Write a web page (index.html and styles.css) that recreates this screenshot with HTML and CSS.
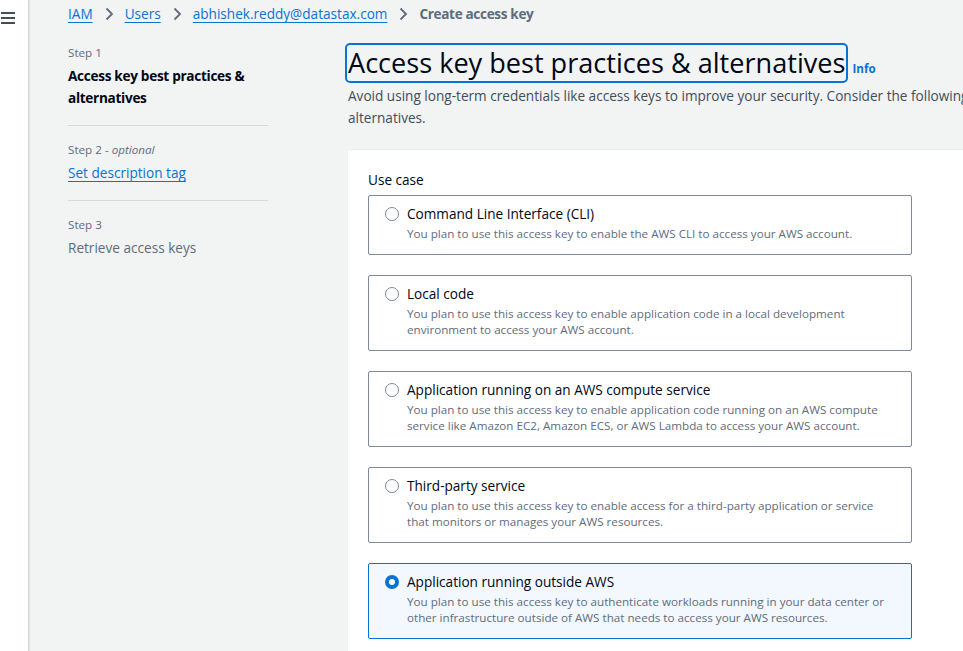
FILE: index.html
```html
<!DOCTYPE html>
<html lang="en">
<head>
<meta charset="utf-8">
<title>Create access key</title>
<link rel="stylesheet" href="styles.css">
</head>
<body>
<div class="app">
  <aside class="navstrip">
    <div class="hamburger"><span></span><span></span><span></span></div>
  </aside>
  <div class="page">
    <nav class="breadcrumbs">
      <a href="#">IAM</a>
      <svg class="chev" viewBox="0 0 16 16"><path d="M5.5 2.5l5.5 5.5-5.5 5.5"/></svg>
      <a href="#">Users</a>
      <svg class="chev" viewBox="0 0 16 16"><path d="M5.5 2.5l5.5 5.5-5.5 5.5"/></svg>
      <a href="#">abhishek.reddy@datastax.com</a>
      <svg class="chev" viewBox="0 0 16 16"><path d="M5.5 2.5l5.5 5.5-5.5 5.5"/></svg>
      <span class="crumb-current">Create access key</span>
    </nav>
    <div class="layout">
      <ol class="steps">
        <li class="step">
          <div class="step-label">Step 1</div>
          <div class="step-title active">Access key best practices &amp; alternatives</div>
        </li>
        <li class="step">
          <div class="step-label">Step 2 - <i>optional</i></div>
          <a class="step-title link" href="#">Set description tag</a>
        </li>
        <li class="step">
          <div class="step-label">Step 3</div>
          <div class="step-title disabled">Retrieve access keys</div>
        </li>
      </ol>
      <main class="main">
        <div class="header">
          <h1 class="title">Access key best practices &amp; alternatives</h1>
          <a class="info" href="#">Info</a>
        </div>
        <p class="desc">Avoid using long-term credentials like access keys to improve your security. Consider the following alternatives.</p>
        <section class="card">
          <div class="field-label">Use case</div>
          <div class="tiles">
            <label class="tile">
              <span class="radio"></span>
              <span class="tile-text">
                <span class="tile-title">Command Line Interface (CLI)</span>
                <span class="tile-desc">You plan to use this access key to enable the AWS CLI to access your AWS account.</span>
              </span>
            </label>
            <label class="tile">
              <span class="radio"></span>
              <span class="tile-text">
                <span class="tile-title">Local code</span>
                <span class="tile-desc">You plan to use this access key to enable application code in a local development environment to access your AWS account.</span>
              </span>
            </label>
            <label class="tile">
              <span class="radio"></span>
              <span class="tile-text">
                <span class="tile-title">Application running on an AWS compute service</span>
                <span class="tile-desc">You plan to use this access key to enable application code running on an AWS compute service like Amazon EC2, Amazon ECS, or AWS Lambda to access your AWS account.</span>
              </span>
            </label>
            <label class="tile">
              <span class="radio"></span>
              <span class="tile-text">
                <span class="tile-title">Third-party service</span>
                <span class="tile-desc">You plan to use this access key to enable access for a third-party application or service that monitors or manages your AWS resources.</span>
              </span>
            </label>
            <label class="tile selected">
              <span class="radio checked"></span>
              <span class="tile-text">
                <span class="tile-title">Application running outside AWS</span>
                <span class="tile-desc">You plan to use this access key to authenticate workloads running in your data center or other infrastructure outside of AWS that needs to access your AWS resources.</span>
              </span>
            </label>
          </div>
        </section>
      </main>
    </div>
  </div>
</div>
</body>
</html>
```

FILE: styles.css
```css
* { box-sizing: border-box; }
html, body {
  margin: 0;
  padding: 0;
  height: 100%;
  overflow: hidden;
}
body {
  font-family: "Open Sans", "Noto Sans", Arial, sans-serif;
  font-size: 13.6px;
  line-height: 20px;
  color: #000716;
  background: #f2f3f3;
}
a { color: #0972d3; }

.app {
  display: flex;
  min-height: 100%;
}
.navstrip {
  flex: 0 0 29px;
  background: #ffffff;
  border-right: 1px solid #d5dbdb;
  box-shadow: 1px 0 1px rgba(0, 7, 22, 0.08);
}
.hamburger {
  display: flex;
  flex-direction: column;
  gap: 3px;
  padding: 12px 0 0 1px;
}
.hamburger span {
  display: block;
  width: 14px;
  height: 2px;
  background: #414d5c;
}

.page {
  flex: 1;
  padding-left: 39px;
  min-width: 0;
}
.breadcrumbs {
  display: flex;
  align-items: center;
  height: 20px;
  margin-top: 4px;
  white-space: nowrap;
}
.breadcrumbs a {
  text-decoration: underline;
  text-underline-offset: 3px;
}
.chev {
  width: 16px;
  height: 16px;
  margin: 0 8px;
  fill: none;
  stroke: #5f6b7a;
  stroke-width: 1.8;
}
.crumb-current {
  color: #5f6b7a;
  font-weight: 700;
  letter-spacing: -0.35px;
}

.layout {
  display: flex;
  gap: 80px;
  margin-top: 19px;
}
.steps {
  list-style: none;
  margin: 0;
  padding: 2px 0 0;
  flex: 0 0 200px;
}
.step {
  border-bottom: 1px solid #d5dbdb;
  padding-bottom: 16px;
  margin-bottom: 16px;
}
.step:last-child { border-bottom: 0; }
.step-label {
  font-size: 11.65px;
  line-height: 16px;
  color: #5f6b7a;
  margin-bottom: 4px;
}
.step-title {
  display: block;
  line-height: 22px;
}
.step-title.active { font-weight: 700; color: #000716; letter-spacing: -0.3px; }
.step-title.link { text-decoration: underline; text-underline-offset: 3px; }
.step-title.disabled { color: #5f6b7a; }

.main {
  flex: 0 0 680px;
  width: 680px;
  margin-left: -3px;
}
.header {
  display: flex;
  align-items: baseline;
  gap: 4px;
}
.title {
  margin: 0;
  font-size: 27.1px;
  font-weight: 400;
  line-height: 36px;
  padding: 0 1px;
  border: 2px solid #0972d3;
  border-radius: 5px;
  color: #000716;
}
.info {
  font-size: 11.65px;
  font-weight: 700;
  text-decoration: none;
}
.desc {
  margin: 2px 0 0 3px;
  line-height: 22px;
  color: #414d5c;
}
.card {
  margin: 20px 0 0 3px;
  background: #ffffff;
  border-top: 1px solid #e9ebed;
  box-shadow: 0 1px 1px rgba(0, 28, 36, 0.1);
  padding: 19px 20px 20px;
  min-height: 520px;
}
.field-label {
  line-height: 22px;
  margin-bottom: 4px;
}
.tiles {
  width: 544px;
  display: flex;
  flex-direction: column;
  gap: 20px;
}
.tile {
  display: flex;
  gap: 8px;
  border: 1px solid #7d8998;
  border-radius: 2px;
  padding: 8px 14px 12px 16px;
}
.tile.selected {
  border-color: #0972d3;
  background: #f2f8fd;
}
.radio {
  flex: 0 0 14px;
  width: 14px;
  height: 14px;
  margin-top: 3px;
  border: 1.5px solid #7d8998;
  border-radius: 50%;
  background: #fff;
}
.radio.checked {
  border: 4px solid #0972d3;
}
.tile-text {
  display: flex;
  flex-direction: column;
}
.tile-title {
  line-height: 20px;
}
.tile-desc {
  margin-top: 2px;
  font-size: 11.65px;
  line-height: 16px;
  color: #5f6b7a;
}
```
